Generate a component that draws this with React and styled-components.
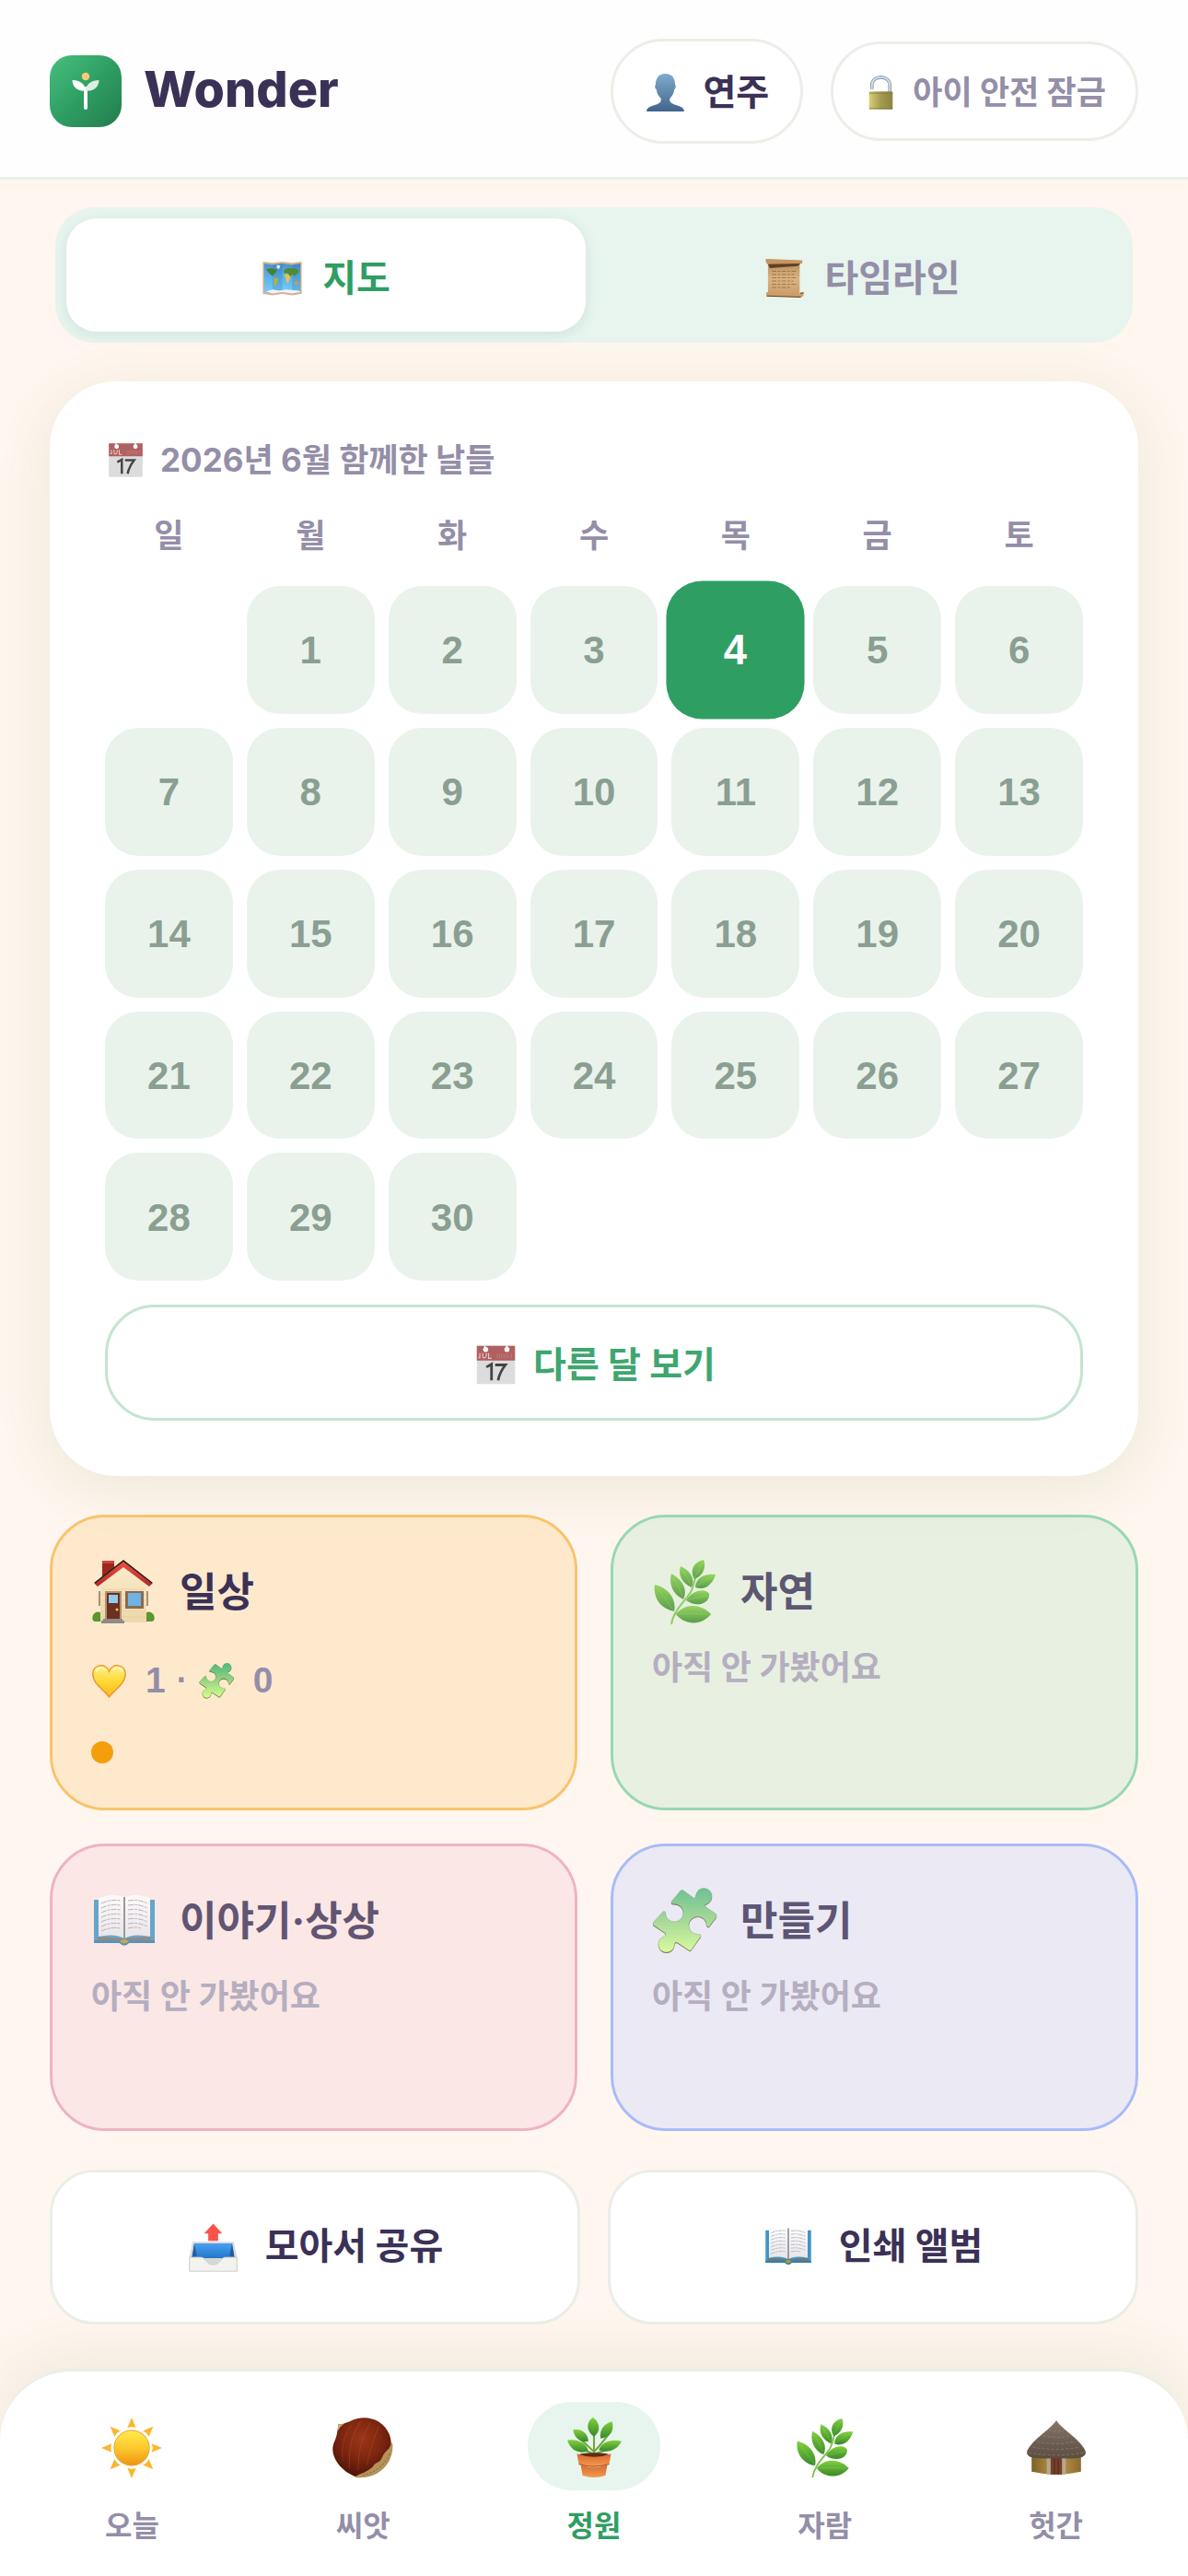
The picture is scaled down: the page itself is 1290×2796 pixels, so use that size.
import { useState } from "react";
import styled, { createGlobalStyle } from "styled-components";

const WEEKDAYS = ["일", "월", "화", "수", "목", "금", "토"];
const DAYS = Array.from({ length: 30 }, (_, i) => i + 1);

const PLACES = [
  {
    name: "일상",
    icon: HouseIcon,
    bg: "rgba(245, 158, 11, 0.15)",
    border: "#f9c36d",
    hearts: 1,
    puzzles: 0,
  },
  {
    name: "자연",
    icon: HerbIcon,
    bg: "rgba(47, 190, 120, 0.11)",
    border: "#98d8b4",
  },
  { name: "이야기·상상", icon: BookIcon, bg: "#fbe7e5", border: "#eeb3c2" },
  { name: "만들기", icon: PuzzleIcon, bg: "#ebe9f3", border: "#a9bbf8" },
];

const NAV_ITEMS = [
  { id: "today", label: "오늘", icon: SunIcon },
  { id: "seed", label: "씨앗", icon: ChestnutIcon },
  { id: "garden", label: "정원", icon: PlantIcon },
  { id: "growth", label: "자람", icon: HerbIcon },
  { id: "barn", label: "헛간", icon: HutIcon },
];

export default function App() {
  const [tab, setTab] = useState("map");
  const [selectedDay, setSelectedDay] = useState(4);

  return (
    <>
      <GlobalStyle />
      <GradientDefs />
      <Page>
        <Header>
          <Brand>
            <LogoIcon />
            <BrandName>Wonder</BrandName>
          </Brand>
          <HeaderActions>
            <ProfileButton type="button">
              <Icon $size={45}>
                <PersonIcon />
              </Icon>
              연주
            </ProfileButton>
            <LockButton type="button">
              <Icon $size={39}>
                <LockIcon />
              </Icon>
              아이 안전 잠금
            </LockButton>
          </HeaderActions>
        </Header>

        <Main>
          <Tabs role="tablist">
            <Tab
              type="button"
              role="tab"
              aria-selected={tab === "map"}
              $active={tab === "map"}
              onClick={() => setTab("map")}
            >
              <Icon $size={45}>
                <MapIcon />
              </Icon>
              지도
            </Tab>
            <Tab
              type="button"
              role="tab"
              aria-selected={tab === "timeline"}
              $active={tab === "timeline"}
              onClick={() => setTab("timeline")}
            >
              <Icon $size={45}>
                <ScrollIcon />
              </Icon>
              타임라인
            </Tab>
          </Tabs>

          <CalendarCard>
            <CalendarTitle>
              <Icon $size={45}>
                <CalendarIcon />
              </Icon>
              2026년 6월 함께한 날들
            </CalendarTitle>
            <WeekRow>
              {WEEKDAYS.map((day) => (
                <Weekday key={day}>{day}</Weekday>
              ))}
            </WeekRow>
            <DayGrid>
              <span />
              {DAYS.map((day) => (
                <Day
                  key={day}
                  type="button"
                  $selected={day === selectedDay}
                  onClick={() => setSelectedDay(day)}
                >
                  {day}
                </Day>
              ))}
            </DayGrid>
            <MonthButton type="button">
              <Icon $size={51}>
                <CalendarIcon />
              </Icon>
              다른 달 보기
            </MonthButton>
          </CalendarCard>

          <PlaceGrid>
            {PLACES.map((place) => (
              <Place key={place.name} {...place} />
            ))}
          </PlaceGrid>

          <ActionRow>
            <ActionButton type="button">
              <Icon $size={57}>
                <OutboxIcon />
              </Icon>
              모아서 공유
            </ActionButton>
            <ActionButton type="button">
              <Icon $size={54}>
                <BookIcon />
              </Icon>
              인쇄 앨범
            </ActionButton>
          </ActionRow>
        </Main>

        <BottomNav>
          {NAV_ITEMS.map(({ id, label, icon: NavIcon }) => (
            <NavItem key={id} href={`#${id}`} $active={id === "garden"}>
              <NavPill $active={id === "garden"}>
                <Icon $size={66}>
                  <NavIcon />
                </Icon>
              </NavPill>
              {label}
            </NavItem>
          ))}
        </BottomNav>
      </Page>
    </>
  );
}

function Place({ name, icon: PlaceIcon, bg, border, hearts, puzzles }) {
  const visited = hearts !== undefined;

  return (
    <PlaceCard type="button" $bg={bg} $border={border}>
      <PlaceHead $faded={!visited}>
        <Icon $size={72}>
          <PlaceIcon />
        </Icon>
        {name}
      </PlaceHead>
      {visited ? (
        <>
          <PlaceStats>
            <Stat>
              <Icon $size={39}>
                <HeartIcon />
              </Icon>
              {hearts}
            </Stat>
            <StatDot>·</StatDot>
            <Stat>
              <Icon $size={39}>
                <PuzzleIcon />
              </Icon>
              {puzzles}
            </Stat>
          </PlaceStats>
          <VisitDot />
        </>
      ) : (
        <PlaceEmpty>아직 안 가봤어요</PlaceEmpty>
      )}
    </PlaceCard>
  );
}

/* ---------- icons ---------- */

function Gradient({ id, stops, x2 = 0, y2 = 1 }) {
  return (
    <linearGradient id={id} x1="0" y1="0" x2={x2} y2={y2}>
      {stops.map((color, i) => (
        <stop key={i} offset={i / (stops.length - 1)} stopColor={color} />
      ))}
    </linearGradient>
  );
}

function GradientDefs() {
  return (
    <HiddenSvg width="0" height="0" aria-hidden="true">
      <defs>
        <Gradient id="logo" stops={["#46c07e", "#2f9e63", "#227c4c"]} x2={1} />
        <Gradient id="person" stops={["#80abce", "#41658c"]} />
        <Gradient id="brass" stops={["#d8cf7c", "#a59b50", "#8c8440"]} x2={1} y2={0} />
        <Gradient id="sea" stops={["#4a92cc", "#5fb4ea", "#7bcdfa"]} />
        <Gradient id="paper" stops={["#b98d5f", "#dbb381", "#c99f6c"]} />
        <Gradient id="wall" stops={["#fdeccb", "#ecd7ab"]} />
        <Gradient id="roof" stops={["#ee4f43", "#b32a24"]} />
        <Gradient id="leaf" stops={["#80d13c", "#38882a"]} />
        <Gradient id="heart" stops={["#fff08a", "#ffd935", "#f9b624"]} />
        <Gradient id="puzzle" stops={["#4fb87c", "#97d583", "#d6ff8a"]} />
        <Gradient id="page" stops={["#ffffff", "#e4e4ea"]} />
        <Gradient id="tray" stops={["#4aa0f4", "#2377c8"]} />
        <Gradient id="sun" stops={["#ffec4d", "#fdc92e", "#ee9412"]} />
        <Gradient id="pot" stops={["#d9682c", "#f39a50"]} />
        <Gradient id="thatch" stops={["#85766a", "#5b4d42"]} />
        <Gradient id="clay" stops={["#7d6228", "#c19a4b", "#8a6c2e"]} x2={1} y2={0} />
        <radialGradient id="nut" cx="0.5" cy="0.35" r="0.7">
          <stop offset="0" stopColor="#9c3516" />
          <stop offset="0.5" stopColor="#7c2610" />
          <stop offset="1" stopColor="#451006" />
        </radialGradient>
      </defs>
    </HiddenSvg>
  );
}

function LogoIcon() {
  return (
    <svg width="78" height="78" viewBox="0 0 78 78" aria-hidden="true">
      <rect width="78" height="78" rx="24" fill="url(#logo)" />
      <path d="M39 36V57" stroke="#fff" strokeWidth="4" strokeLinecap="round" />
      <path d="M24.500 27C33 27 38 31 39.500 38.500C30 39.500 24.500 34 24.500 27Z" fill="#fff" />
      <path d="M53.500 27C45 27 40 31 38.500 38.500C48 39.500 53.500 34 53.500 27Z" fill="#dcefe3" />
      <circle cx="39" cy="23" r="4.200" fill="#ffc97c" />
    </svg>
  );
}

function PersonIcon() {
  return (
    <svg viewBox="0 0 64 64" aria-hidden="true">
      <path
        d="M32 3C21 3 17 11 17 20C15 21 16 26 18 27C19 34 22 38 25 41C26 46 24 48 19 50C9 53 3 55 3 61H61C61 55 55 53 45 50C40 48 38 46 39 41C42 38 45 34 46 27C48 26 49 21 47 20C47 11 43 3 32 3Z"
        fill="url(#person)"
      />
    </svg>
  );
}

function LockIcon() {
  return (
    <svg viewBox="0 0 64 64" aria-hidden="true">
      <path d="M16 26V19C16 0 48 0 48 19V32" fill="none" stroke="#8797a6" strokeWidth="6" />
      <path d="M16 26V19C16 0 48 0 48 19V32" fill="none" stroke="#cfe0ef" strokeWidth="3" />
      <rect x="11" y="30" width="42" height="32" rx="2" fill="url(#brass)" />
      <path d="M11 33H53M11 60H53" stroke="#7e7738" strokeWidth="2" opacity="0.6" />
    </svg>
  );
}

function MapIcon() {
  return (
    <svg viewBox="0 0 64 64" aria-hidden="true">
      <path d="M2 7L17 9L32 7L47 9L62 7V57L47 59L32 57L17 59L2 57Z" fill="#d9b08c" />
      <path d="M4 10L17 12L32 10L47 12L60 10V54L47 56L32 54L17 56L4 54Z" fill="url(#sea)" />
      <path d="M17 12L32 10V54L17 56ZM47 12L60 10V54L47 56Z" fill="#1b5f9a" opacity="0.2" />
      <path d="M7 19L15 17L24 20L21 25L17 29L14 27L11 24Z" fill="#47822f" />
      <path d="M19 31L26 34L23 42L21 46L19 39Z" fill="#b9b23a" />
      <path d="M24 12L29 13L27 19L23 16Z" fill="#e7edf0" />
      <path d="M34 21L40 17L54 18L58 22L52 29L47 27L44 31L40 25L35 25Z" fill="#518a34" />
      <path d="M34 27L41 26L45 31L41 40L38 38L37 32Z" fill="#e0c257" />
      <path d="M50 38L56 37L57 42L51 42Z" fill="#d49a40" />
      <path d="M7 53L17 50L27 52L38 50L58 52L60 54L47 56L32 54L17 56Z" fill="#f1f4f6" />
    </svg>
  );
}

function ScrollIcon() {
  return (
    <svg viewBox="0 0 64 64" aria-hidden="true">
      <path d="M7 8H56V58H7Z" fill="url(#paper)" />
      <path d="M4 3L60 5V10L6 11Q2 7 4 3Z" fill="#c89560" />
      <path d="M7 11L57 10L53 14L10 17Z" fill="#5f4026" />
      <path d="M5 54L60 56L62 54V60L58 62L5 60Q3 57 5 54Z" fill="#cf9d68" />
      <path d="M5 60L58 62M57 56L62 55" stroke="#5a3a20" strokeWidth="1.500" />
      <path
        d="M13 22H51M13 27H48M13 32H51M13 37H46M13 42H50M13 47H43"
        stroke="#8c6238"
        strokeWidth="1"
        strokeDasharray="7 2 4 2"
      />
    </svg>
  );
}

function CalendarIcon() {
  return (
    <svg viewBox="0 0 64 64" aria-hidden="true">
      <path d="M6 6H58V58H6Z" fill="#dcdcdc" />
      <path d="M6 6H58V26H6Z" fill="#b06060" />
      <path d="M17 6V10M46 6L49 10" stroke="#fff" strokeWidth="2" />
      <circle cx="18" cy="11" r="3.500" fill="#fff" />
      <circle cx="47" cy="11" r="3.500" fill="#fff" />
      <path d="M10 16V22H8M14 16V20Q14 23 17 22Q19 22 19 16M22 16V23H26" fill="none" stroke="#e6c8c8" strokeWidth="1.500" />
      <path d="M34 17V23M37 17V23M40 16V23M43 17V23M46 16V23M49 17V23M53 16V23" stroke="#c58383" strokeWidth="1" />
      <path d="M19 35L26 31V53M31 32H45Q37 42 35 53" fill="none" stroke="#444" strokeWidth="3.500" />
    </svg>
  );
}

function HouseIcon() {
  return (
    <svg viewBox="-1 -1 72 72" aria-hidden="true">
      <path d="M11 1H24V20H11Z" fill="#9c2820" />
      <path d="M11 1H24V4H11Z" fill="#c9463a" />
      <path d="M9 26L34 5L59 26V68H9Z" fill="url(#wall)" />
      <path d="M10 32H58M10 38H58M10 44H58M10 50H58M10 56H58M10 62H58" stroke="#dfc699" strokeWidth="0.500" />
      <path d="M34 0L66 25L62 28L34 6L6 28L2 25Z" fill="#23201f" />
      <path d="M34 2L65 26L62 29L34 8L6 29L3 26Z" fill="url(#roof)" />
      <path d="M14 34H32V65H14Z" fill="#b59270" />
      <path d="M16 36H30V65H16Z" fill="#6b3020" />
      <path d="M18 38H28V47H18Z" fill="#8ecbee" />
      <circle cx="27" cy="54" r="1.500" fill="#f3c552" />
      <path d="M36 34H56V53H36Z" fill="#8a6b50" />
      <path d="M39 36H53V50H39Z" fill="#6fb3e4" />
      <path d="M8 34V50M60 34V50" stroke="#94714f" strokeWidth="1.500" />
      <path d="M12 64H33V66H35V69H10V66H12Z" fill="#8f8b89" />
      <path d="M9 57V67H3Q-1 66 1 60Q4 55 9 57ZM59 57V67H65Q69 66 67 60Q64 55 59 57Z" fill="#5b962f" />
    </svg>
  );
}

function HerbIcon() {
  return (
    <svg viewBox="-3 -1 72 72" aria-hidden="true">
      <path d="M18 70C20 55 34 44 39 35C43 28 43 20 46 14" fill="none" stroke="#7cc448" strokeWidth="2" />
      <g fill="url(#leaf)">
        <path d="M0 27C14 30 24 42 21 56C5 53 -2 40 0 27Z" />
        <path d="M18 15C31 22 36 33 31 43C19 37 15 26 18 15Z" />
        <path d="M28 7C39 12 44 21 40 30C29 25 25 16 28 7Z" />
        <path d="M53 0C41 3 38 12 43 21C53 17 56 8 53 0Z" />
        <path d="M66 16C53 14 44 21 44 30C55 34 63 26 66 16Z" />
        <path d="M34 44C42 31 56 31 59 37C60 48 45 52 34 44Z" />
        <path d="M23 59C33 46 51 48 61 59C51 72 32 71 23 59Z" />
      </g>
      <path
        d="M2 30Q12 42 21 56M20 19Q27 30 31 42M30 11Q36 20 40 29M52 3Q47 12 43 20M63 18Q52 23 44 30M56 39Q46 41 35 44M57 59Q42 58 25 59"
        fill="none"
        stroke="#a5de6c"
        strokeWidth="0.800"
        opacity="0.400"
      />
    </svg>
  );
}

function HeartIcon() {
  return (
    <svg viewBox="0 0 64 64" aria-hidden="true">
      <path
        d="M32 61C24 48 3 39 3 19C3 2 27-1 32 15C37-1 61 2 61 19C61 39 40 48 32 61Z"
        fill="url(#heart)"
        stroke="#f08a1c"
        strokeWidth="2"
      />
      <path d="M9 16C11 8 21 7 25 13M39 13C43 7 53 8 55 16" fill="none" stroke="#fffbe0" strokeWidth="3" opacity="0.700" />
    </svg>
  );
}

function PuzzleIcon() {
  const shape =
    "M31 2Q32 1 34 2L45 10Q48 12 48 7A9 9 0 1 1 60 17Q56 18 60 21L70 28Q72 30 70 33L63 42Q61 44 60 41A10 10 0 1 0 50 51Q55 51 53 54L43 68Q42 70 39 68L27 60Q24 59 24 63A9 9 0 1 1 11 54Q16 52 13 49L1 41Q-1 39 1 37L11 26Q14 24 14 28A10 10 0 1 0 24 17Q19 17 21 14Z";
  return (
    <svg viewBox="-1 -1 74 74" aria-hidden="true">
      <path d={shape} fill="#5b4a30" transform="translate(0 1)" />
      <path d={shape} fill="url(#puzzle)" stroke="#5f9b58" strokeWidth="0.500" />
    </svg>
  );
}

function BookIcon() {
  return (
    <svg viewBox="0 0 72 72" aria-hidden="true">
      <path d="M3 13H69V60H41Q36 65 31 60H3Z" fill="#4196c6" />
      <path d="M3 57H69V60H41Q36 65 31 60H3Z" fill="#327ea8" />
      <path d="M7 53L33 55H39L65 53V57H41L36 60L31 57H7Z" fill="#77736e" />
      <path d="M8 11Q26 5 36 11V55Q26 49 8 53ZM64 11Q46 5 36 11V55Q46 49 64 53Z" fill="url(#page)" />
      <path d="M36 10V55" stroke="#84848c" strokeWidth="2" />
      <path
        d="M11 17Q21 12 32 14M11 22Q21 17 32 19M11 27Q21 22 32 24M11 32Q21 27 32 29M11 37Q21 32 32 34M11 42Q21 37 32 39M11 47Q21 42 32 44M40 14Q51 12 61 17M40 19Q51 17 61 22M40 24Q51 22 61 27M40 29Q51 27 61 32M40 34Q51 32 61 37M40 39Q51 37 61 42M40 44Q48 42 54 44"
        fill="none"
        stroke="#a6a6b0"
        strokeWidth="1"
        strokeDasharray="6 1 3 1"
      />
      <path d="M31 58Q36 54 41 58Q36 63 31 58Z" fill="#b19a3c" />
    </svg>
  );
}

function OutboxIcon() {
  return (
    <svg viewBox="0 0 64 64" aria-hidden="true">
      <path d="M7 26H57L61 45V61H3V45Z" fill="#d8d8d4" />
      <path d="M9 28H55L58 46H6Z" fill="url(#tray)" />
      <path d="M9 28L12 43L6 46ZM55 28L52 43L58 46Z" fill="#1f5f9f" />
      <path d="M3 45H17C23 45 23 54 32 54C41 54 41 45 47 45H61V62H3Z" fill="#f2f2ee" stroke="#c9c9c4" strokeWidth="1" />
      <path d="M32 4L43 16H38V25H26V16H21Z" fill="#fb5349" />
    </svg>
  );
}

function SunIcon() {
  return (
    <svg viewBox="0 0 64 64" aria-hidden="true">
      <circle cx="32" cy="32" r="18.500" fill="url(#sun)" stroke="#eba02c" strokeWidth="1" />
      {[0, 45, 90, 135, 180, 225, 270, 315].map((angle) => (
        <path key={angle} d="M32 0L36.500 11Q32 9 27.500 11Z" fill="#f9b62c" transform={`rotate(${angle} 32 32)`} />
      ))}
    </svg>
  );
}

function ChestnutIcon() {
  return (
    <svg viewBox="0 0 64 64" aria-hidden="true">
      <path d="M6 7Q12 7 18 4C34-4 53 1 60 18C65 32 59 46 50 54C41 62 31 64 24 62C10 57-3 42 1 28Q6 17 6 7Z" fill="url(#nut)" />
      <path d="M63 26C66 44 52 66 24 63C24 60 34 59 41 53C44 51 43 49 48 47C53 44 52 40 56 36C61 32 61 29 63 26Z" fill="#b3935a" />
      <path d="M60 38C56 50 44 58 32 61" fill="none" stroke="#8c6c38" strokeWidth="1" strokeDasharray="2 2" />
      <path d="M6 7L12 7Q8 9 6 14Z" fill="#d9b36a" />
      <path d="M20 8Q8 24 11 46M30 4Q16 24 18 54M40 5Q27 26 27 55M49 9Q40 30 36 50" fill="none" stroke="#bb5a32" strokeWidth="1" opacity="0.350" />
    </svg>
  );
}

function PlantIcon() {
  return (
    <svg viewBox="0 0 64 64" aria-hidden="true">
      <path d="M32 38V12M32 36Q24 28 14 20M32 36Q40 28 50 14M31 38Q20 34 12 30M33 38Q44 35 52 31" fill="none" stroke="#6fa83e" strokeWidth="2" />
      <g fill="url(#leaf)">
        <path d="M32 20C23 14 24 4 31 0C38 5 40 14 32 20Z" />
        <path d="M26 25C18 27 11 21 10 13C19 11 26 17 26 25Z" />
        <path d="M26 35C18 39 7 35 4 24C14 22 24 27 26 35Z" />
        <path d="M39 22C37 13 43 6 51 4C54 13 49 21 39 22Z" />
        <path d="M37 34C40 26 50 22 61 25C57 34 46 38 37 34Z" />
      </g>
      <ellipse cx="32" cy="40" rx="17" ry="3" fill="#5d2d16" />
      <path d="M14 38Q32 45 50 38L48 49Q32 54 16 49Z" fill="url(#pot)" />
      <path d="M18 50Q32 55 46 50L44 61Q32 65 20 61Z" fill="url(#pot)" />
      <path d="M16 49Q32 54 48 49" fill="none" stroke="#a94c1c" strokeWidth="1" />
    </svg>
  );
}

function HutIcon() {
  return (
    <svg viewBox="0 0 64 64" aria-hidden="true">
      <path d="M6 40H58V57Q32 63 6 57Z" fill="url(#clay)" />
      <path d="M22 42H42V60H22Z" fill="#b5a88e" />
      <path d="M26 42H38V60H26Z" fill="#75402a" />
      <path d="M30 42V60M34 42V60" stroke="#54291a" strokeWidth="1" />
      <path d="M32 3Q34 7 44 15C54 23 63 32 63 37C62 44 50 43 32 43C14 43 2 44 1 37C1 32 10 23 20 15Q30 7 32 3Z" fill="url(#thatch)" />
      <path
        d="M24 13Q32 16 40 13M18 19Q32 23 46 19M12 25Q32 30 52 25M7 31Q32 36 57 31M3 37Q32 42 61 37"
        fill="none"
        stroke="#a0917f"
        strokeWidth="1"
        strokeDasharray="3 2"
        opacity="0.500"
      />
    </svg>
  );
}

/* ---------- styles ---------- */

const GlobalStyle = createGlobalStyle`
  * {
    box-sizing: border-box;
  }

  body {
    margin: 0;
    background: #fff6ef;
    color: #3b3157;
    font-family: "Inter", "Noto Sans CJK KR", sans-serif;
    font-weight: 700;
  }

  button {
    margin: 0;
    font: inherit;
    color: inherit;
    cursor: pointer;
  }
`;

const HiddenSvg = styled.svg`
  display: block;
`;

const Icon = styled.span`
  display: block;
  flex: none;
  width: ${({ $size }) => $size}px;
  height: ${({ $size }) => $size}px;

  svg {
    display: block;
    width: 100%;
    height: 100%;
  }
`;

const Page = styled.div`
  display: flex;
  flex-direction: column;
  min-height: 100vh;
`;

const Header = styled.header`
  display: flex;
  justify-content: space-between;
  align-items: center;
  padding: 42px 54px 36px;
  background: #fefefe;
  border-bottom: 3px solid #ebeee7;
`;

const Brand = styled.div`
  display: flex;
  align-items: center;
  gap: 24px;
`;

const BrandName = styled.h1`
  margin: 0;
  padding-bottom: 4px;
  font-size: 54px;
  line-height: 72px;
  font-weight: 800;
`;

const HeaderActions = styled.div`
  display: flex;
  align-items: center;
  gap: 30px;
`;

const PillButton = styled.button`
  display: flex;
  align-items: center;
  background: #fff;
  border: 3px solid #eceee7;
  border-radius: 57px;
`;

const ProfileButton = styled(PillButton)`
  gap: 18px;
  padding: 28px 34px 26px;
  font-size: 39px;
  line-height: 54px;
`;

const LockButton = styled(PillButton)`
  gap: 15px;
  padding: 28px 32px 26px;
  font-size: 35px;
  line-height: 48px;
  color: #948ea8;
`;

const Main = styled.main`
  flex: 1;
  display: flex;
  flex-direction: column;
  gap: 42px;
  padding: 30px 54px 48px;
`;

const Tabs = styled.div`
  display: grid;
  grid-template-columns: 1fr 1fr;
  gap: 18px;
  margin: 0 6px;
  padding: 12px;
  background: #e7f5ee;
  border-radius: 42px;
`;

const Tab = styled.button`
  display: flex;
  justify-content: center;
  align-items: center;
  gap: 21px;
  padding: 36px 33px 30px;
  border: 0;
  border-radius: 33px;
  font-size: 40px;
  line-height: 57px;
  color: ${({ $active }) => ($active ? "#2f9e63" : "#948ea8")};
  background: ${({ $active }) => ($active ? "#fff" : "transparent")};
  box-shadow: ${({ $active }) => ($active ? "0 3px 15px rgba(47, 110, 80, 0.12)" : "none")};
`;

const CalendarCard = styled.section`
  padding: 60px;
  background: #fff;
  border-radius: 72px;
  box-shadow: 0 12px 60px rgba(90, 130, 60, 0.12);
`;

const CalendarTitle = styled.h2`
  display: flex;
  align-items: center;
  gap: 15px;
  margin: 0 0 30px;
  font-size: 35px;
  line-height: 50px;
  color: #948ea8;
`;

const WeekRow = styled.div`
  display: grid;
  grid-template-columns: repeat(7, 1fr);
  gap: 15px;
  margin-bottom: 28px;
`;

const Weekday = styled.span`
  text-align: center;
  font-size: 35px;
  line-height: 54px;
  color: #948ea8;
`;

const DayGrid = styled.div`
  display: grid;
  grid-template-columns: repeat(7, 1fr);
  gap: 15px;
`;

const Day = styled.button`
  aspect-ratio: 1;
  padding: 2px 0 0;
  border: 0;
  border-radius: 36px;
  background: ${({ $selected }) => ($selected ? "#2f9e63" : "#e9f3eb")};
  color: ${({ $selected }) => ($selected ? "#fff" : "#8b9e92")};
  font-family: "Liberation Sans", Arial, sans-serif;
  font-size: 42px;
  transform: ${({ $selected }) => ($selected ? "scale(1.08)" : "none")};
`;

const MonthButton = styled.button`
  display: flex;
  justify-content: center;
  align-items: center;
  gap: 15px;
  width: 100%;
  margin-top: 26px;
  padding: 35px 33px 31px;
  background: #fff;
  border: 3px solid #c3e5d1;
  border-radius: 54px;
  font-size: 39px;
  line-height: 54px;
  color: #3fa670;
`;

const PlaceGrid = styled.section`
  display: grid;
  grid-template-columns: 1fr 1fr;
  gap: 36px;
`;

const PlaceCard = styled.button`
  display: flex;
  flex-direction: column;
  align-items: flex-start;
  min-height: 312px;
  padding: 48px 42px;
  text-align: left;
  background: ${({ $bg }) => $bg};
  background-clip: padding-box;
  border: 3px solid ${({ $border }) => $border};
  border-radius: 60px;
`;

const PlaceHead = styled.span`
  display: flex;
  align-items: center;
  gap: 24px;
  height: 66px;
  font-size: 44px;
  line-height: 66px;
  opacity: ${({ $faded }) => ($faded ? 0.8 : 1)};
`;

const PlaceStats = styled.span`
  display: flex;
  align-items: center;
  gap: 12px;
  margin-top: 38px;
  font-family: "Liberation Sans", "Noto Sans CJK KR", sans-serif;
  font-size: 39px;
  line-height: 50px;
  color: #948ea8;
`;

const Stat = styled.span`
  display: flex;
  align-items: center;
  gap: 20px;
`;

const StatDot = styled.span`
  font-size: 36px;
`;

const VisitDot = styled.span`
  width: 24px;
  height: 24px;
  margin-top: 41px;
  border-radius: 50%;
  background: #f59e0b;
`;

const PlaceEmpty = styled.span`
  margin-top: 24px;
  font-size: 36px;
  line-height: 51px;
  color: #b5aec0;
`;

const ActionRow = styled.div`
  display: grid;
  grid-template-columns: 1fr 1fr;
  gap: 30px;
`;

const ActionButton = styled.button`
  display: flex;
  justify-content: center;
  align-items: center;
  gap: 28px;
  padding: 50px 51px 52px;
  background: #fff;
  border: 3px solid #ebeee6;
  border-radius: 48px;
  font-size: 40px;
  line-height: 60px;
`;

const BottomNav = styled.nav`
  display: grid;
  grid-template-columns: repeat(5, 1fr);
  padding: 33px 18px;
  background: #fff;
  border-top: 3px solid #ebeee6;
  border-radius: 78px 78px 0 0;
  box-shadow: 0 -12px 60px rgba(90, 130, 60, 0.1);
`;

const NavItem = styled.a`
  display: flex;
  flex-direction: column;
  align-items: center;
  gap: 18px;
  font-size: 32px;
  line-height: 42px;
  font-weight: ${({ $active }) => ($active ? 700 : 600)};
  color: ${({ $active }) => ($active ? "#2f9e63" : "#948ea8")};
  text-decoration: none;
`;

const NavPill = styled.span`
  display: flex;
  justify-content: center;
  align-items: center;
  width: 144px;
  height: 96px;
  padding-top: 3px;
  border-radius: 48px;
  background: ${({ $active }) => ($active ? "#e7f5ee" : "transparent")};
`;
